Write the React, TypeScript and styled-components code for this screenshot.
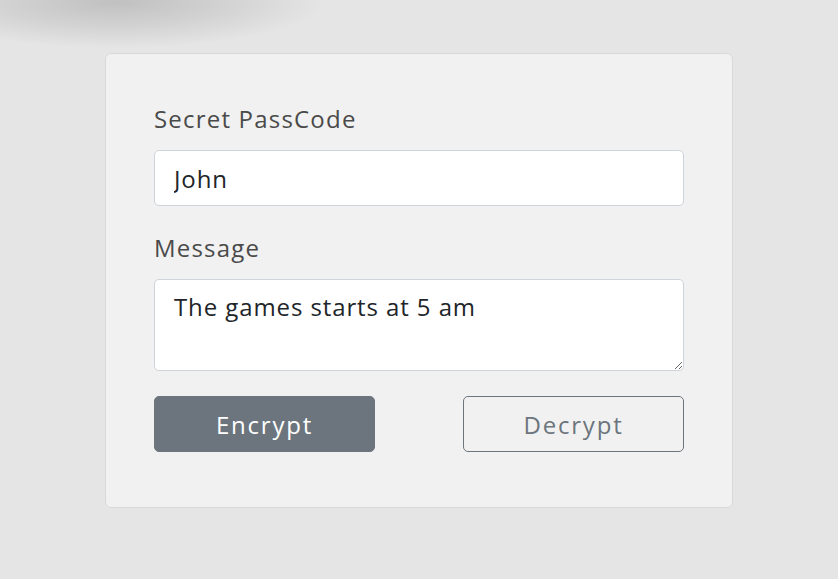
import React, { useState } from 'react'
import styled, { createGlobalStyle } from 'styled-components'

const GlobalStyle = createGlobalStyle`
    html, body {
        margin: 0;
        padding: 0;
    }
    body {
        min-height: 579px;
        font-family: 'Open Sans', 'Noto Sans', sans-serif;
        background-color: #e5e5e5;
        background-image: radial-gradient(
            ellipse 210px 46px at 115px 2px,
            rgba(0, 0, 0, 0.16) 0%,
            rgba(0, 0, 0, 0.08) 55%,
            rgba(0, 0, 0, 0) 100%
        );
        background-repeat: no-repeat;
    }
`

const App = () => {
    const [passCode, setPassCode] = useState('John')
    const [message, setMessage] = useState('The games starts at 5 am')

    return (
        <Page>
            <GlobalStyle />
            <Card>
                <Field>
                    <Label htmlFor="passcode">Secret PassCode</Label>
                    <Input
                        id="passcode"
                        value={passCode}
                        onChange={(e) => setPassCode(e.target.value)}
                    />
                </Field>
                <Field>
                    <Label htmlFor="message">Message</Label>
                    <TextArea
                        id="message"
                        value={message}
                        onChange={(e) => setMessage(e.target.value)}
                    />
                </Field>
                <ButtonRow>
                    <Button $variant="solid">Encrypt</Button>
                    <Button $variant="outline">Decrypt</Button>
                </ButtonRow>
            </Card>
        </Page>
    )
}

const Page = styled.main`
    display: flex;
    justify-content: center;
    padding-top: 53px;
`

const Card = styled.section`
    box-sizing: border-box;
    width: 628px;
    padding: 48px 48px 55px;
    background: #f1f1f1;
    border: 1px solid #d9d9d9;
    border-radius: 6px;
    display: flex;
    flex-direction: column;
`

const Field = styled.div`
    display: flex;
    flex-direction: column;
    margin-bottom: 25px;
`

const Label = styled.label`
    font-size: 24px;
    line-height: 33px;
    color: #4a4a4a;
    margin-bottom: 15px;
    letter-spacing: 1.2px;
`

const controlStyles = `
    box-sizing: border-box;
    width: 100%;
    font-family: 'Open Sans', 'Noto Sans', sans-serif;
    font-size: 24px;
    letter-spacing: 0.9px;
    color: #212529;
    background: #ffffff;
    border: 1px solid #ced4da;
    border-radius: 5px;
    padding: 0 19px;
    outline: none;
`

const Input = styled.input`
    ${controlStyles}
    height: 56px;
`

const TextArea = styled.textarea`
    ${controlStyles}
    height: 92px;
    padding-top: 10px;
    line-height: 33px;
    resize: vertical;
    display: block;
`

const ButtonRow = styled.div`
    display: flex;
    justify-content: space-between;
`

const Button = styled.button<{ $variant: 'solid' | 'outline' }>`
    box-sizing: border-box;
    width: 221px;
    height: 56px;
    font-family: 'Open Sans', 'Noto Sans', sans-serif;
    font-size: 24px;
    letter-spacing: 1.8px;
    border-radius: 5px;
    border: 1px solid #6c757d;
    cursor: pointer;
    background: ${({ $variant }) =>
        $variant === 'solid' ? '#6c757d' : 'transparent'};
    color: ${({ $variant }) => ($variant === 'solid' ? '#ffffff' : '#6c757d')};
`

export default App
